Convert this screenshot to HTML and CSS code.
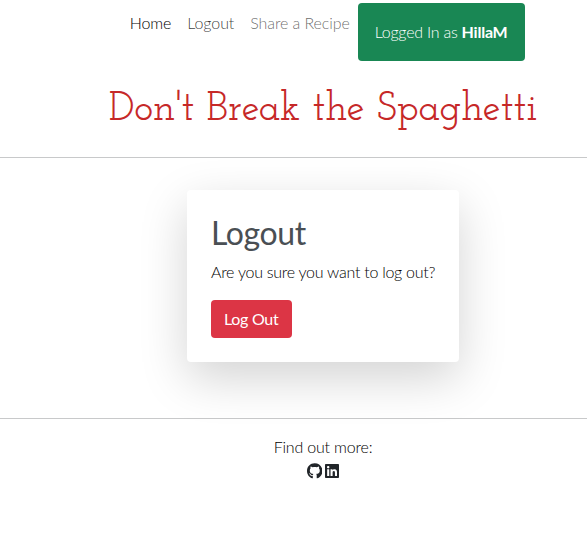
FILE: index.html
```html
<!DOCTYPE html>
<html lang="en">
<head>
<meta charset="utf-8">
<title>Don't Break the Spaghetti</title>
<link rel="stylesheet" href="styles.css">
</head>
<body>
<div class="page">
  <nav class="nav">
    <a class="link active" href="#">Home</a>
    <a class="link current" href="#">Logout</a>
    <a class="link" href="#">Share a Recipe</a>
    <span class="status">Logged In as <strong>HillaM</strong></span>
  </nav>
  <h1 class="brand">Don't Break the Spaghetti</h1>
  <main class="main">
    <section class="card">
      <h2 class="heading">Logout</h2>
      <p class="question">Are you sure you want to log out?</p>
      <button class="button" type="button">Log Out</button>
    </section>
  </main>
  <footer class="footer">
    <p class="more">Find out more:</p>
    <div class="social">
      <svg viewBox="0 0 496 512" width="15.5" height="16"><path fill="currentColor" d="M165.9 397.4c0 2-2.3 3.6-5.2 3.6-3.3.3-5.6-1.3-5.6-3.6 0-2 2.3-3.6 5.2-3.6 3-.3 5.6 1.3 5.6 3.6zM244.8 8C106.100 8 0 113.300 0 252c0 110.900 69.800 205.800 169.500 239.200 12.800 2.300 17.300-5.600 17.300-12.100 0-6.200-.3-40.400-.3-61.400 0 0-70 15-84.700-29.800 0 0-11.400-29.100-27.800-36.600 0 0-22.900-15.700 1.600-15.400 0 0 24.900 2 38.600 25.800 21.900 38.600 58.600 27.500 72.900 20.900 2.300-16 8.800-27.100 16-33.700-55.900-6.200-112.300-14.300-112.300-110.500 0-27.500 7.600-41.300 23.600-58.900-2.600-6.500-11.100-33.300 2.600-67.900 20.900-6.500 69 27 69 27 20-5.600 41.500-8.500 62.800-8.500s42.800 2.900 62.800 8.500c0 0 48.100-33.600 69-27 13.700 34.700 5.200 61.400 2.600 67.900 16 17.700 25.800 31.500 25.800 58.900 0 96.500-58.900 104.200-114.800 110.500 9.200 7.900 17 22.900 17 46.400 0 33.700-.3 75.400-.3 83.600 0 6.500 4.600 14.400 17.300 12.100C428.200 457.800 496 362.900 496 252 496 113.300 383.500 8 244.800 8z"/></svg>
      <svg viewBox="0 0 448 512" width="14" height="16"><path fill="currentColor" d="M416 32H31.900C14.300 32 0 46.500 0 64.300v383.400C0 465.500 14.300 480 31.900 480H416c17.600 0 32-14.500 32-32.300V64.300c0-17.800-14.400-32.300-32-32.300zM135.400 416H69V202.200h66.500V416zm-33.200-243c-21.300 0-38.500-17.300-38.500-38.500S80.900 96 102.200 96c21.200 0 38.500 17.300 38.500 38.500 0 21.300-17.200 38.500-38.500 38.500zm282.100 243h-66.400V312c0-24.800-.5-56.700-34.500-56.700-34.600 0-39.900 27-39.900 54.900V416h-66.400V202.200h63.700v29.200h.9c8.900-16.800 30.600-34.500 62.900-34.500 67.200 0 79.700 44.300 79.700 101.900V416z"/></svg>
    </div>
  </footer>
</div>
</body>
</html>
```
FILE: styles.css
```css
* { box-sizing: border-box; }
body {
  margin: 0;
  background: #fff;
  color: #212529;
  font: 300 16px/24px Lato, "Liberation Sans", sans-serif;
}
h1, h2, p { margin: 0; }
.nav {
  display: flex;
  align-items: flex-start;
  padding: 3px 0 0 121.700px;
}
.link {
  padding: 8px;
  color: rgba(0, 0, 0, .6);
  letter-spacing: -.09px;
  text-decoration: none;
  white-space: nowrap;
}
.link.current { color: rgba(0, 0, 0, .78); }
.link.active { color: #000; }
.status {
  width: 167px;
  height: 58px;
  padding: 17px;
  border-radius: 4px;
  background: #198754;
  color: #fff;
  letter-spacing: -.24px;
  white-space: nowrap;
}
.status strong { font-weight: 700; }
.brand {
  height: 96px;
  padding: 25px 0 0 59px;
  color: #c62828;
  font: 500 40.400px/48px "Josefin Slab", "Liberation Serif", serif;
  text-align: center;
  white-space: nowrap;
}
.main {
  display: flex;
  justify-content: center;
  height: 262px;
  padding: 32px 0 0 59px;
  border: solid #c8c9ca;
  border-width: 1px 0;
}
.card {
  width: 272px;
  height: 172px;
  padding: 24px;
  border-radius: 4px;
  background: #fff;
  box-shadow: 0 16px 48px rgba(0, 0, 0, .175);
}
.heading {
  margin-bottom: 8px;
  color: #4a4f54;
  font-size: 32px;
  font-weight: 400;
  letter-spacing: -.4px;
  line-height: 38px;
}
.question {
  color: #000;
  letter-spacing: -.26px;
  white-space: nowrap;
}
.button {
  width: 81px;
  height: 38px;
  margin-top: 16px;
  padding: 6px 13px;
  border: 0;
  border-radius: 4px;
  background: #dc3545;
  color: #fff;
  font: inherit;
  font-weight: 400;
  letter-spacing: -.3px;
  text-align: left;
  white-space: nowrap;
}
.footer {
  padding: 16px 0 0 59px;
  text-align: center;
}
.more {
  color: #000;
  letter-spacing: -.18px;
}
.social {
  display: flex;
  justify-content: center;
  gap: 3px;
  padding-top: 4px;
}
```
